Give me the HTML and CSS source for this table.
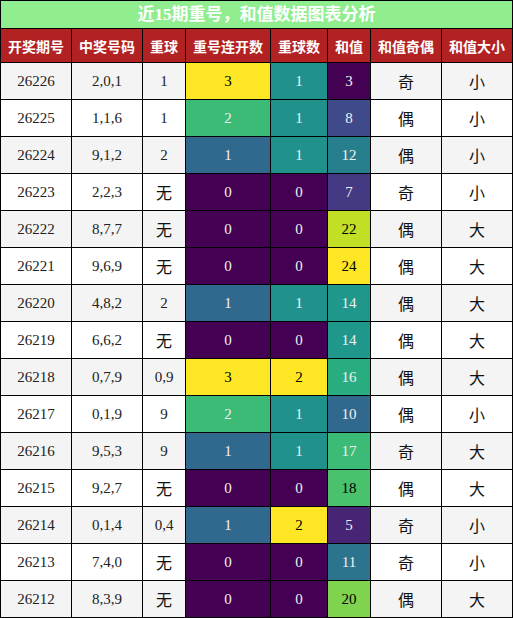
FILE: index.html
```html
<!DOCTYPE HTML>
<html>

<head>
    <title>近15期重号，和值数据图表分析</title>
    <meta name="viewport" content="width=device-width, initial-scale=1">
    <link rel="stylesheet" href="styles.css">
</head>

<body>
    <table class="stats">
        <colgroup>
            <col class="w71"><col class="w71"><col class="w43"><col class="w85">
            <col class="w57"><col class="w43"><col class="w71"><col class="w71">
        </colgroup>
        <thead>
            <tr><th class="title" colspan="8">近15期重号，和值数据图表分析</th></tr>
            <tr class="head">
                <th>开奖期号</th><th>中奖号码</th><th>重球</th><th>重号连开数</th>
                <th>重球数</th><th>和值</th><th>和值奇偶</th><th>和值大小</th>
            </tr>
        </thead>
        <tbody>
            <!-- background colours: viridis, scaled per column -->
            <tr><td>26226</td><td>2,0,1</td><td>1</td>
                <td class="dk" style="background:#fde725">3</td><td class="lt" style="background:#21918c">1</td><td class="lt" style="background:#440154">3</td>
                <td class="cn">奇</td><td class="cn">小</td></tr>
            <tr><td>26225</td><td>1,1,6</td><td>1</td>
                <td class="lt" style="background:#3bbb75">2</td><td class="lt" style="background:#21918c">1</td><td class="lt" style="background:#3e4a89">8</td>
                <td class="cn">偶</td><td class="cn">小</td></tr>
            <tr><td>26224</td><td>9,1,2</td><td>2</td>
                <td class="lt" style="background:#31688e">1</td><td class="lt" style="background:#21918c">1</td><td class="lt" style="background:#277f8e">12</td>
                <td class="cn">偶</td><td class="cn">小</td></tr>
            <tr><td>26223</td><td>2,2,3</td><td class="cn">无</td>
                <td class="lt" style="background:#440154">0</td><td class="lt" style="background:#440154">0</td><td class="lt" style="background:#443a83">7</td>
                <td class="cn">奇</td><td class="cn">小</td></tr>
            <tr><td>26222</td><td>8,7,7</td><td class="cn">无</td>
                <td class="lt" style="background:#440154">0</td><td class="lt" style="background:#440154">0</td><td class="dk" style="background:#c0df25">22</td>
                <td class="cn">偶</td><td class="cn">大</td></tr>
            <tr><td>26221</td><td>9,6,9</td><td class="cn">无</td>
                <td class="lt" style="background:#440154">0</td><td class="lt" style="background:#440154">0</td><td class="dk" style="background:#fde725">24</td>
                <td class="cn">偶</td><td class="cn">大</td></tr>
            <tr><td>26220</td><td>4,8,2</td><td>2</td>
                <td class="lt" style="background:#31688e">1</td><td class="lt" style="background:#21918c">1</td><td class="lt" style="background:#1f978b">14</td>
                <td class="cn">偶</td><td class="cn">大</td></tr>
            <tr><td>26219</td><td>6,6,2</td><td class="cn">无</td>
                <td class="lt" style="background:#440154">0</td><td class="lt" style="background:#440154">0</td><td class="lt" style="background:#1f978b">14</td>
                <td class="cn">偶</td><td class="cn">大</td></tr>
            <tr><td>26218</td><td>0,7,9</td><td>0,9</td>
                <td class="dk" style="background:#fde725">3</td><td class="dk" style="background:#fde725">2</td><td class="lt" style="background:#29ac80">16</td>
                <td class="cn">偶</td><td class="cn">大</td></tr>
            <tr><td>26217</td><td>0,1,9</td><td>9</td>
                <td class="lt" style="background:#3bbb75">2</td><td class="lt" style="background:#21918c">1</td><td class="lt" style="background:#31688e">10</td>
                <td class="cn">偶</td><td class="cn">小</td></tr>
            <tr><td>26216</td><td>9,5,3</td><td>9</td>
                <td class="lt" style="background:#31688e">1</td><td class="lt" style="background:#21918c">1</td><td class="lt" style="background:#3bbb75">17</td>
                <td class="cn">奇</td><td class="cn">大</td></tr>
            <tr><td>26215</td><td>9,2,7</td><td class="cn">无</td>
                <td class="lt" style="background:#440154">0</td><td class="lt" style="background:#440154">0</td><td class="dk" style="background:#4ac16d">18</td>
                <td class="cn">偶</td><td class="cn">大</td></tr>
            <tr><td>26214</td><td>0,1,4</td><td>0,4</td>
                <td class="lt" style="background:#31688e">1</td><td class="dk" style="background:#fde725">2</td><td class="lt" style="background:#482475">5</td>
                <td class="cn">奇</td><td class="cn">小</td></tr>
            <tr><td>26213</td><td>7,4,0</td><td class="cn">无</td>
                <td class="lt" style="background:#440154">0</td><td class="lt" style="background:#440154">0</td><td class="lt" style="background:#2c738e">11</td>
                <td class="cn">奇</td><td class="cn">小</td></tr>
            <tr><td>26212</td><td>8,3,9</td><td class="cn">无</td>
                <td class="lt" style="background:#440154">0</td><td class="lt" style="background:#440154">0</td><td class="dk" style="background:#7fd34e">20</td>
                <td class="cn">偶</td><td class="cn">大</td></tr>
        </tbody>
    </table>
</body>

</html>
```

FILE: styles.css
```css
body {
    margin: 0;
    font-family: "Liberation Serif", "Noto Sans CJK SC", serif;
}

.stats {
    border-collapse: collapse;
    table-layout: fixed;
    width: 513px;
    text-align: center;
}

.w71 { width: 71px; }
.w43 { width: 43px; }
.w85 { width: 85px; }
.w57 { width: 57px; }

.stats th,
.stats td {
    border: 1px solid #000;
    padding: 0;
}

.title {
    height: 27px;
    background-color: #90ee90;
    color: #fff;
    font-size: 17px;
    font-weight: bold;
    line-height: 26px;
}

.head th {
    height: 33px;
    background-color: #b22222;
    color: #fff;
    font-family: "Noto Sans CJK SC", sans-serif;
    font-size: 14px;
    font-weight: bold;
}

.stats td {
    height: 36px;
    font-size: 15px;
    color: #222;
}

.stats tbody tr:nth-child(odd) {
    background-color: #f4f4f4;
}

.stats tbody tr:nth-child(even) {
    background-color: #fff;
}

.stats td.cn {
    font-family: "Noto Sans CJK SC", sans-serif;
    font-size: 16px;
    color: #111;
}

.stats td.lt {
    color: #f1f1f1;
}

.stats td.dk {
    color: #000;
}
```
